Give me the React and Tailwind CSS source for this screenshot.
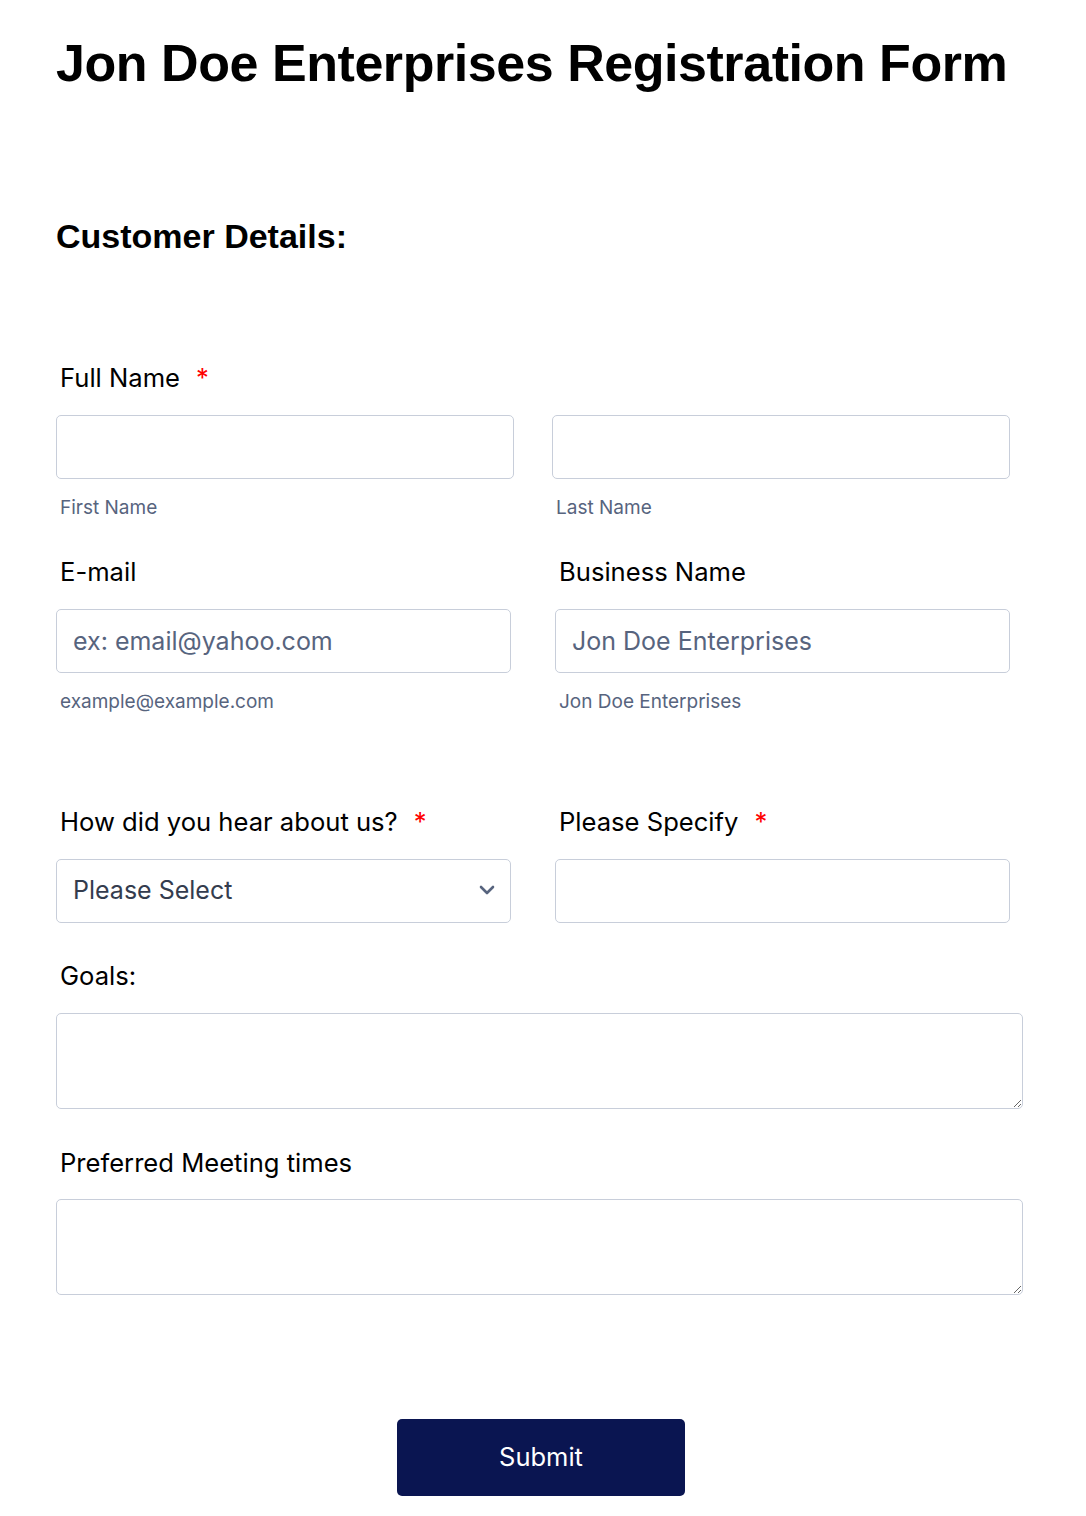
import { useState } from "react";

const inter = { fontFamily: "Inter, 'Noto Sans', sans-serif" };

function Label({ children, required }) {
  return (
    <label className="block h-8 leading-8 text-[25.6px] text-black ml-1 mb-[21px]">
      {children}
      {required && <span className="text-[#ff0000] ml-4">*</span>}
    </label>
  );
}

function Sub({ children }) {
  return (
    <div className="h-6 leading-6 text-[19px] text-[#57647e] ml-1 mt-[17px]">
      {children}
    </div>
  );
}

const boxCls =
  "block w-full h-16 px-4 text-[25px] text-[#2c3345] bg-white border border-[#c8ceda] rounded-[5px] outline-none placeholder:text-[#57647e]";

export default function App() {
  const [form, setForm] = useState({});
  const set = (k) => (e) => setForm({ ...form, [k]: e.target.value });

  return (
    <div className="min-h-screen bg-white px-14 pb-5" style={inter}>
      <h1
        className="pt-8 h-[94px] text-[52px] leading-[62px] font-bold text-black tracking-[-0.45px]"
        style={{ fontFamily: "'Liberation Sans', Arial, sans-serif" }}
      >
        Jon Doe Enterprises Registration Form
      </h1>

      <h2
        className="mt-[122px] h-10 leading-10 text-[34px] font-bold text-black"
        style={{ fontFamily: "'Liberation Sans', Arial, sans-serif" }}
      >
        Customer Details:
      </h2>

      <form className="mt-[106px]" onSubmit={(e) => e.preventDefault()}>
        {/* full name */}
        <Label required>Full Name</Label>
        <div className="flex gap-[38px] w-[954px]">
          <div className="w-[458px]">
            <input className={boxCls} value={form.first || ""} onChange={set("first")} />
            <Sub>First Name</Sub>
          </div>
          <div className="w-[458px]">
            <input className={boxCls} value={form.last || ""} onChange={set("last")} />
            <Sub>Last Name</Sub>
          </div>
        </div>

        {/* email + business */}
        <div className="flex gap-[44px] w-[954px] mt-9">
          <div className="w-[455px]">
            <Label>E-mail</Label>
            <input
              className={boxCls}
              placeholder="ex: email@yahoo.com"
              value={form.email || ""}
              onChange={set("email")}
            />
            <Sub>example@example.com</Sub>
          </div>
          <div className="w-[455px]">
            <Label>Business Name</Label>
            <input
              className={boxCls}
              placeholder="Jon Doe Enterprises"
              value={form.biz || ""}
              onChange={set("biz")}
            />
            <Sub>Jon Doe Enterprises</Sub>
          </div>
        </div>

        {/* hear about / specify */}
        <div className="flex gap-[44px] w-[954px] mt-[92px]">
          <div className="w-[455px]">
            <Label required>How did you hear about us?</Label>
            <div className="relative">
              <select
                className={boxCls + " appearance-none text-[25.5px] text-[#343c4e]"}
                value={form.hear || ""}
                onChange={set("hear")}
              >
                <option value="">Please Select</option>
                <option>Search engine</option>
                <option>Social media</option>
                <option>Friend</option>
              </select>
              <svg
                className="absolute right-[16px] top-[26px] pointer-events-none"
                width="16"
                height="10"
                viewBox="0 0 16 10"
                fill="none"
              >
                <path d="M2 2l6 6 6-6" stroke="#57647e" strokeWidth="2.6" strokeLinecap="round" strokeLinejoin="round" />
              </svg>
            </div>
          </div>
          <div className="w-[455px]">
            <Label required>Please Specify</Label>
            <input className={boxCls} value={form.spec || ""} onChange={set("spec")} />
          </div>
        </div>

        {/* goals */}
        <div className="mt-[37px] w-[967px]">
          <Label>Goals:</Label>
          <textarea
            className="block w-full h-24 px-4 py-3 text-[25px] text-[#2c3345] border border-[#c8ceda] rounded-[5px] outline-none"
            value={form.goals || ""}
            onChange={set("goals")}
          />
        </div>

        {/* meeting */}
        <div className="mt-[38px] w-[967px]">
          <label className="block h-8 leading-8 text-[25.6px] text-black ml-1 mb-5">
            Preferred Meeting times
          </label>
          <textarea
            className="block w-full h-24 px-4 py-3 text-[25px] text-[#2c3345] border border-[#c8ceda] rounded-[5px] outline-none"
            value={form.times || ""}
            onChange={set("times")}
          />
        </div>

        <div className="flex justify-center w-[967px] mt-[124px] pl-[3px]">
          <button
            type="submit"
            className="w-[288px] h-[77px] bg-[#0a1551] text-white text-[25.5px] rounded-[5px]"
          >
            Submit
          </button>
        </div>
      </form>
    </div>
  );
}
